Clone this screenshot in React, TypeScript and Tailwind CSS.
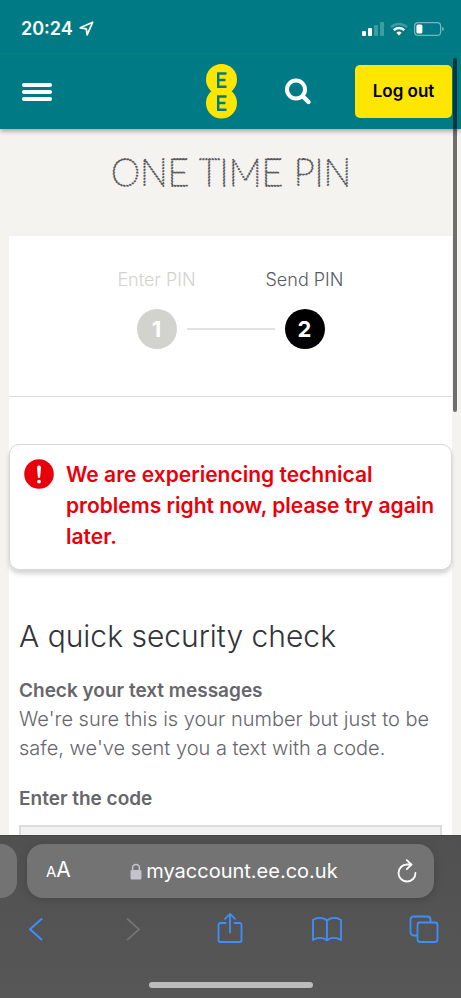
import type { ReactNode } from "react";

const toolIcon = {
  fill: "none",
  stroke: "currentColor",
  strokeWidth: 1.8,
  strokeLinecap: "round",
  strokeLinejoin: "round",
} as const;

function StatusBar() {
  return (
    <div className="flex h-[54px] items-center justify-between border-b border-[#1c757d] pl-[21px] pr-[17px] pt-1 text-white">
      <div className="flex items-center gap-1.5">
        <span className="text-[18px] font-semibold leading-6">20:24</span>
        <svg width="15" height="15" viewBox="0 0 15 15" fill="none" stroke="currentColor" strokeWidth="1.7" strokeLinejoin="round">
          <path d="M13.7 1.2 1.2 6.8l6.1 1 .8 6z" />
        </svg>
      </div>
      <div className="flex items-center gap-1.5">
        <svg width="22" height="14" viewBox="0 0 22 14" fill="currentColor">
          <rect x="0" y="9" width="4" height="5" rx="1" />
          <rect x="6" y="6" width="4" height="8" rx="1" />
          <rect x="12" y="3" width="4" height="11" rx="1" opacity=".25" />
          <rect x="18" y="0" width="4" height="14" rx="1" opacity=".25" />
        </svg>
        <svg width="18" height="14" viewBox="0 0 18 14" fill="none" stroke="currentColor" strokeWidth="2.4">
          <path d="M1 5.2a11.5 11.5 0 0 1 16 0" opacity=".25" />
          <path d="M3.8 8.1a7.5 7.5 0 0 1 10.4 0" />
          <path d="M6.3 10.8a3.8 3.8 0 0 1 5.4 0L9 13.6z" fill="currentColor" stroke="none" />
        </svg>
        <svg width="30" height="14" viewBox="0 0 30 14">
          <rect x=".6" y=".6" width="26" height="12.8" rx="3.5" fill="none" stroke="#fff" strokeWidth="1.2" opacity=".45" />
          <path d="M28.2 5v4q1.6-.6 1.6-2T28.2 5z" fill="#fff" opacity=".5" />
          <rect x="2.4" y="2.4" width="6" height="9.2" rx="1.6" fill="#fff" />
        </svg>
      </div>
    </div>
  );
}

function NavBar() {
  return (
    <nav className="flex h-[75px] items-center pl-[22px] pr-[9px]">
      <button type="button" aria-label="Menu" className="mr-auto flex w-[30px] flex-col gap-[3px]">
        <span className="h-1 rounded-full bg-white" />
        <span className="h-1 rounded-full bg-white" />
        <span className="h-1 rounded-full bg-white" />
      </button>
      <a href="#home" aria-label="EE home" className="mr-[47px]">
        <svg width="31" height="55" viewBox="0 0 31 55">
          <circle cx="15.5" cy="15.5" r="15.5" fill="#ffe600" />
          <circle cx="15.5" cy="39" r="15.5" fill="#ffe600" />
          <g fill="none" stroke="#007b85" strokeWidth="2.4">
            <path d="M20.500 9.500H12.200v13.200h8.300M12 16h7.500" />
            <path d="M20.500 32.500H12.200v13.200h8.300M12 39h7.500" />
          </g>
        </svg>
      </a>
      <button type="button" aria-label="Search" className="mr-[43px]">
        <svg width="28" height="28" viewBox="0 0 28 28" fill="none" stroke="#fff" strokeLinecap="round">
          <circle cx="12" cy="11.500" r="9" strokeWidth="4" />
          <path d="m19 18.500 5.500 5.500" strokeWidth="4.4" />
        </svg>
      </button>
      <button type="button" className="h-[53px] w-[97px] rounded-[5px] bg-[#ffe600] text-[17px] font-semibold text-black">
        Log out
      </button>
    </nav>
  );
}

function Steps() {
  return (
    <div className="border-b border-[#dcdcdc] pb-[47px] pt-8 text-center">
      <div className="flex justify-center text-[18px] font-light leading-6">
        <span className="w-[148px] text-[#d2d2ce]">Enter PIN</span>
        <span className="w-[148px] text-[#5a5a5f]">Send PIN</span>
      </div>
      <div className="mt-[17px] flex items-center justify-center gap-2.5 text-[22px] font-bold leading-10 text-white">
        <span className="size-10 rounded-full bg-[#d2d2ce]">1</span>
        <span className="h-0.5 w-[88px] bg-[#e2e2e2]" />
        <span className="size-10 rounded-full bg-black">2</span>
      </div>
    </div>
  );
}

function Alert({ children }: { children: ReactNode }) {
  return (
    <div role="alert" className="mt-[47px] flex gap-3 rounded-[10px] border border-[#d8d8d8] bg-white pb-[17px] pl-[14px] pr-3 pt-[14px] shadow-[0_4px_4px_rgba(0,0,0,0.16)]">
      <svg width="30" height="30" viewBox="0 0 30 30" className="shrink-0">
        <circle cx="15" cy="15" r="14.8" fill="#e8000b" />
        <path d="M13 8.500a2 2 0 0 1 4 0l-.8 9.300a1.200 1.200 0 0 1-2.400 0z" fill="#fff" />
        <circle cx="15" cy="22.600" r="1.900" fill="#fff" />
      </svg>
      <p className="text-[21px] font-semibold leading-[31px] text-[#e8000b]">{children}</p>
    </div>
  );
}

function BrowserBar() {
  return (
    <footer className="relative z-10 h-[163px] shrink-0 overflow-hidden border-t border-[#444] bg-linear-to-b from-[#505050] to-[#575757] pt-2">
      <div className="flex gap-2.5 pr-[27px]">
        <div className="h-[54px] w-[17px] rounded-r-[16px] bg-[#737373]" />
        <div className="flex h-[54px] flex-1 items-center justify-between rounded-[16px] bg-[#737373] pl-[19px] pr-[17px] text-white shadow-[0_2px_10px_rgba(0,0,0,0.15)]">
          <button type="button" aria-label="Text size" className="leading-6">
            <span className="text-[15px]">A</span>
            <span className="text-[21px]">A</span>
          </button>
          <div className="flex items-center gap-1">
            <svg width="12" height="17" viewBox="0 0 12 17">
              <path d="M2.6 8V4.8a3.4 3.4 0 0 1 6.8 0V8" fill="none" stroke="#c4c3cb" strokeWidth="1.5" />
              <rect x=".5" y="7" width="11" height="9.5" rx="1.5" fill="#c4c3cb" />
            </svg>
            <span className="text-[20px] leading-7">myaccount.ee.co.uk</span>
          </div>
          <button type="button" aria-label="Reload">
            <svg width="20" height="24" viewBox="0 0 20 24" {...toolIcon}>
              <path d="M14.4 5.5H10a8.5 8.5 0 1 0 8.5 8.5" />
              <path d="m9.8 1.2 4.6 4.4-4.6 4.6" />
            </svg>
          </button>
        </div>
      </div>
      <div className="mt-[14px] flex items-center justify-between pl-5 pr-[21px] text-[#3d8fff] [&>button]:flex [&>button]:w-8 [&>button]:justify-center">
        <button type="button" aria-label="Back">
          <svg width="16" height="34" viewBox="0 0 16 34" {...toolIcon} strokeWidth={2}>
            <path d="M13.500 7 2 17.300l11.500 10.300" />
          </svg>
        </button>
        <button type="button" aria-label="Forward" disabled className="text-[#747474]">
          <svg width="16" height="34" viewBox="0 0 16 34" {...toolIcon}>
            <path d="M2.500 7 14 17.300 2.500 27.600" />
          </svg>
        </button>
        <button type="button" aria-label="Share">
          <svg width="26" height="34" viewBox="0 0 26 34" {...toolIcon}>
            <path d="M8.500 11H3.500A2 2 0 0 0 1.500 13v15a2 2 0 0 0 2 2h19a2 2 0 0 0 2-2V13a2 2 0 0 0-2-2h-5" />
            <path d="M13 20.500V1.800M8 6.800l5-5 5 5" />
          </svg>
        </button>
        <button type="button" aria-label="Bookmarks">
          <svg width="32" height="34" viewBox="0 0 32 34" {...toolIcon}>
            <path d="M16 8.500C12.500 5 6 5 2 8v20c4.500-3 10.500-3 14 .3 3.500-3.300 9.500-3.300 14-.3V8c-4-3-10.500-3-14 .5zV28.300" />
          </svg>
        </button>
        <button type="button" aria-label="Tabs">
          <svg width="30" height="34" viewBox="0 0 30 34" {...toolIcon}>
            <rect x="8.500" y="10.500" width="20" height="19.500" rx="2.500" />
            <path d="M8 23.500H4.500a3 3 0 0 1-3-3v-13a3 3 0 0 1 3-3h14a3 3 0 0 1 3 3v2.500" />
          </svg>
        </button>
      </div>
      <div className="mx-auto mt-9 h-1.5 w-[164px] rounded-full bg-[#bdbdbd]" />
    </footer>
  );
}

export default function App() {
  return (
    <div className="relative flex h-screen flex-col overflow-hidden bg-[#f4f3ef] font-['Inter',sans-serif]">
      <header className="relative z-10 shrink-0 bg-[#007b85] shadow-[0_2px_5px_rgba(0,0,0,0.35)]">
        <StatusBar />
        <NavBar />
      </header>

      <main className="min-h-0 flex-1 overflow-hidden px-[9px]">
        <h1 className="flex h-[107px] justify-center pt-2.5">
          {/* dotted display lettering */}
          <svg width="300" height="72" viewBox="0 0 300 72" className="overflow-visible">
            <text
              x="150"
              y="47"
              textAnchor="middle"
              className="fill-none stroke-[#5a5a5f] font-['Lato',sans-serif] text-[37px] font-thin"
              strokeWidth="1.8"
              strokeLinecap="round"
              strokeDasharray="0.1 2.9"
            >
              ONE TIME PIN
            </text>
          </svg>
        </h1>

        <div className="bg-white">
          <Steps />
          <Alert>We are experiencing technical problems right now, please try again later.</Alert>

          <form className="px-2.5 pt-[46px] text-[19px] leading-[29px] text-[#66666b]">
            <h2 className="text-[30px] font-light leading-10 text-[#333338]">A quick security check</h2>
            <h3 className="mt-5 font-semibold">Check your text messages</h3>
            <p className="text-[20px] font-light">We're sure this is your number but just to be safe, we've sent you a text with a code.</p>
            <label htmlFor="code" className="mt-[21px] block font-semibold">
              Enter the code
            </label>
            <input id="code" type="text" className="mt-3 block h-[50px] w-full border-2 border-[#dcdcda] bg-[#f2f2f2] px-3" />
          </form>
        </div>
      </main>

      <BrowserBar />

      {/* page scroll indicator */}
      <div className="absolute right-1 top-[58px] z-20 h-[354px] w-1 rounded-full bg-black/55" />
    </div>
  );
}
